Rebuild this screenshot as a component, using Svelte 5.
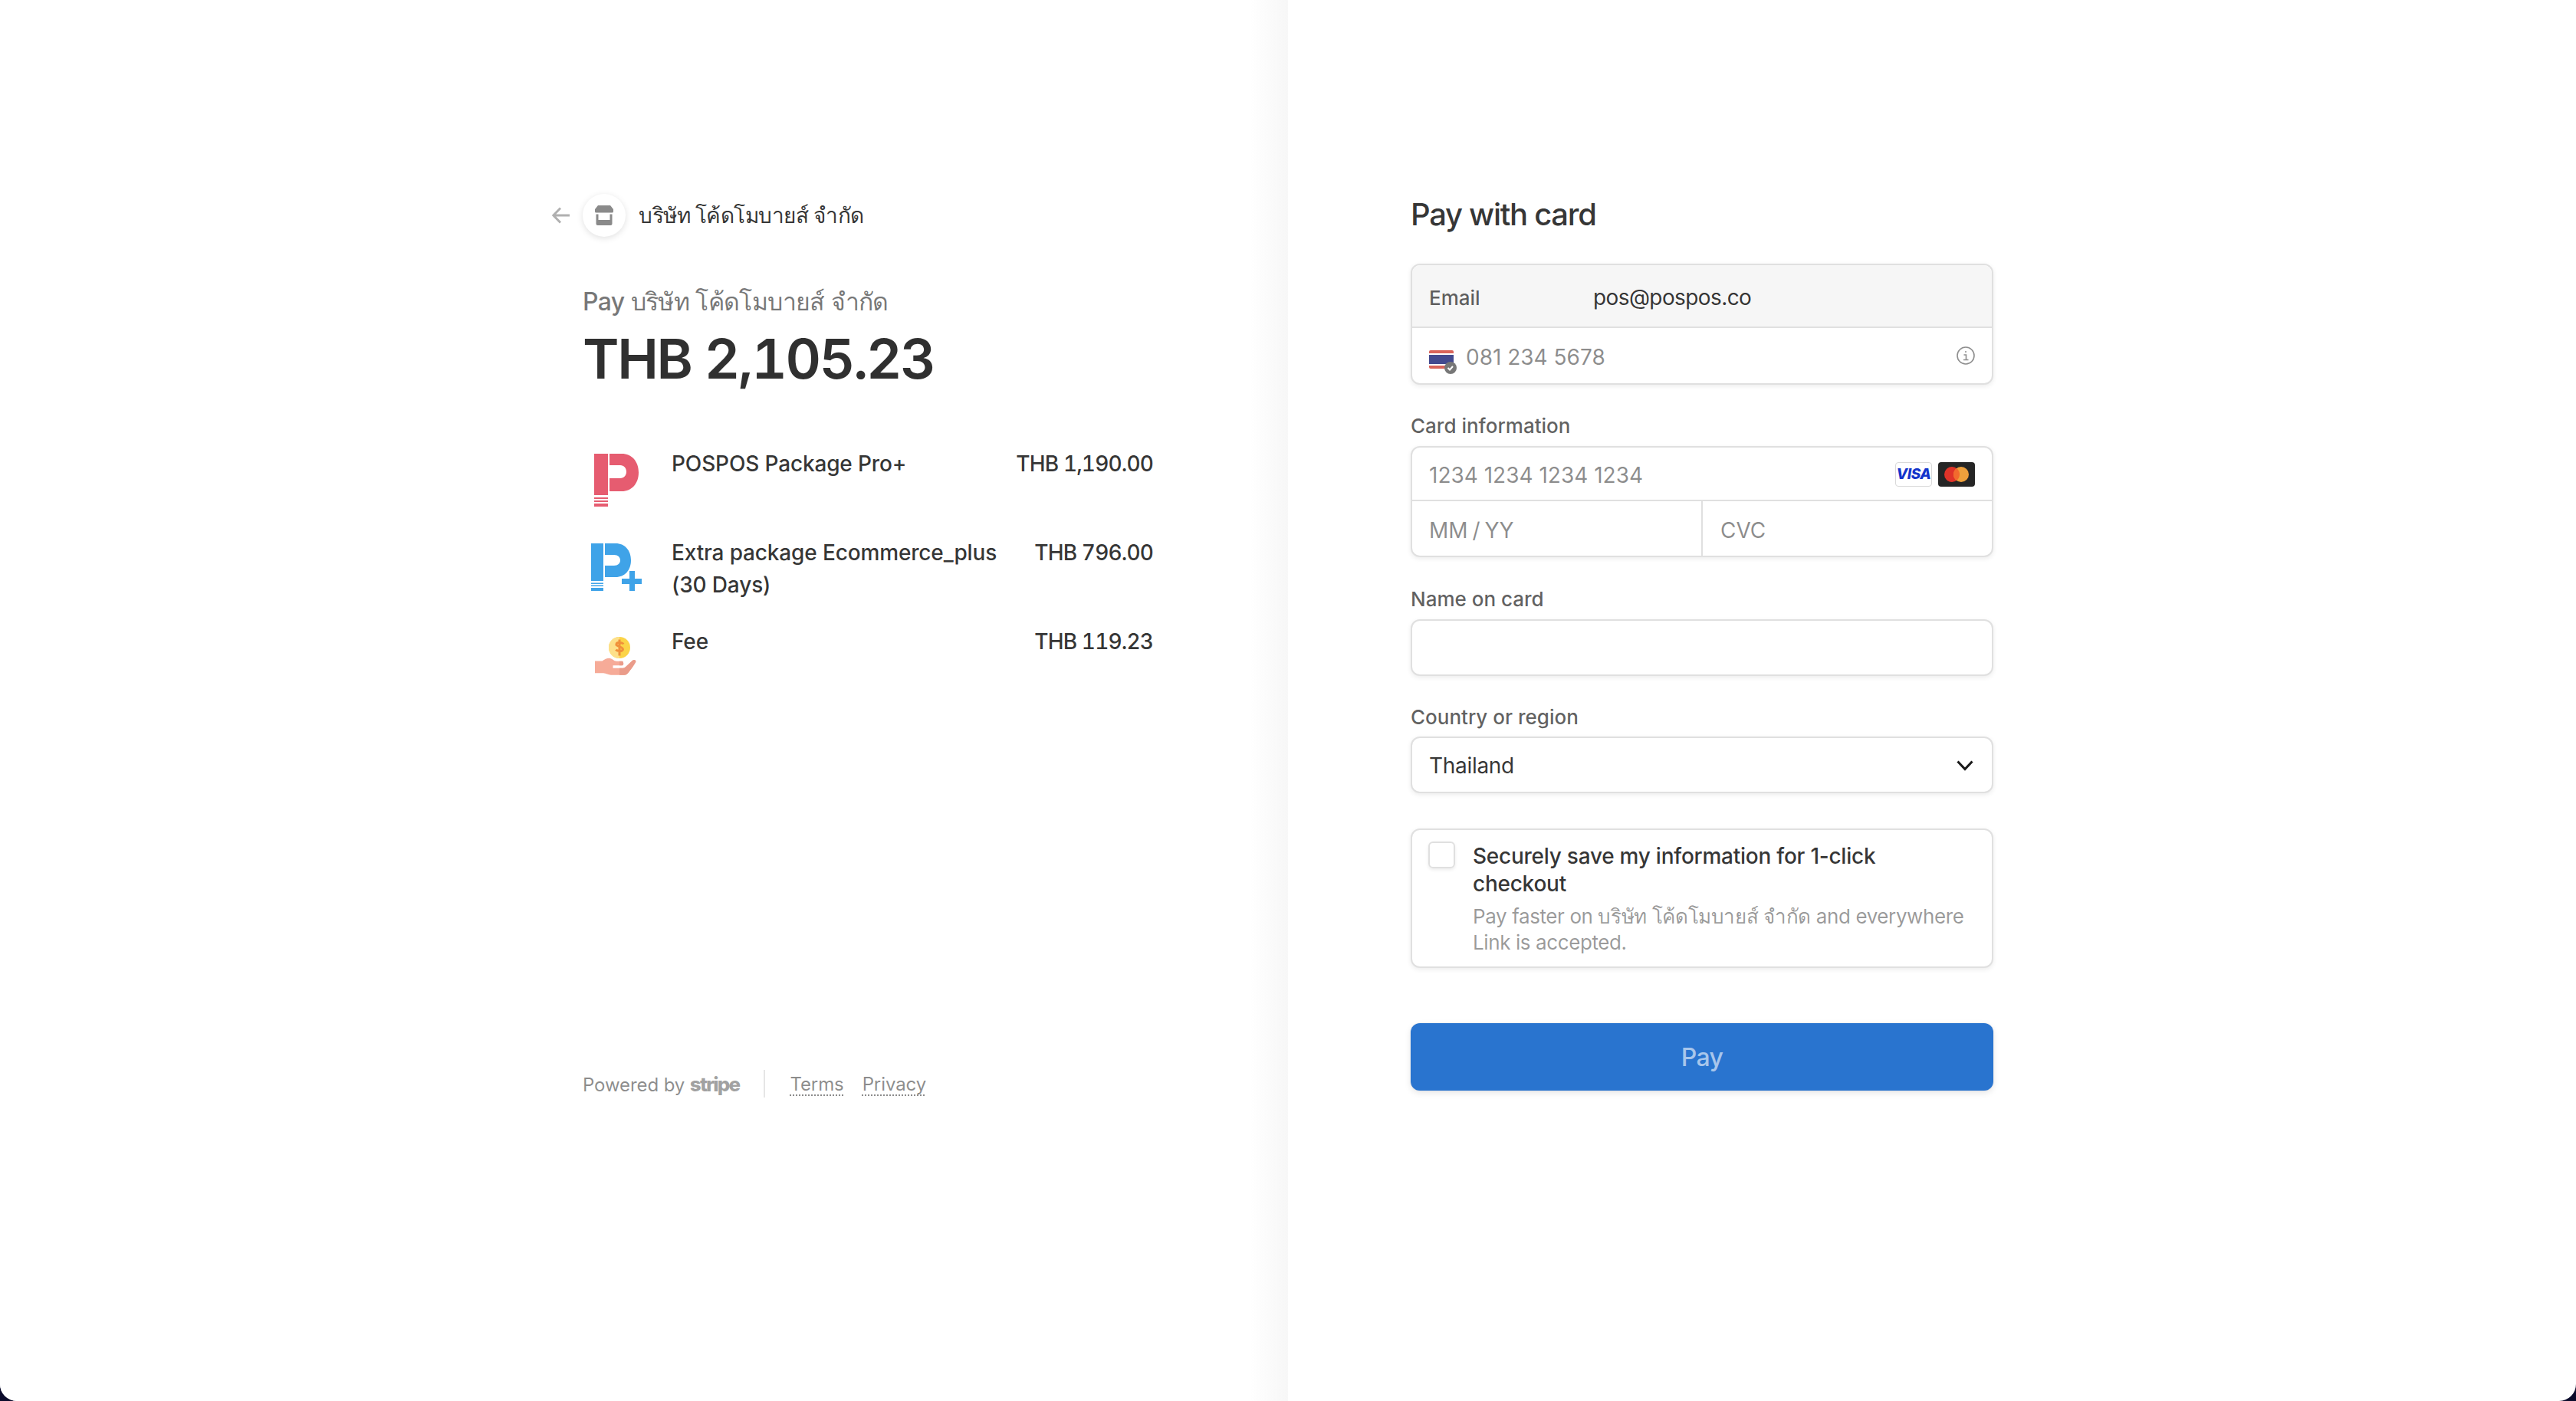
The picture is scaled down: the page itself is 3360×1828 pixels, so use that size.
<script>
	const items = [
		{ name: 'POSPOS Package Pro+', price: 'THB 1,190.00', icon: 'red' },
		{ name: 'Extra package Ecommerce_plus (30 Days)', price: 'THB 796.00', icon: 'blue' },
		{ name: 'Fee', price: 'THB 119.23', icon: 'fee' }
	]
	const company = 'บริษัท โค้ดโมบายส์ จำกัด'
	const hand = 'M16 46.500h9.500c3-2.500 6-3.800 9-3.800 4 0 6 4 10 4h7c2 0 2.500 5.500 0 5.500H39.500v3.500h13c2 0 3-1 4.500-2.500l8-7.500c2-1.800 5.500-.5 4 2.500-2.500 4-5 8-8 11.500-2 3-4 5-7 5H37c-4 0-6-2.500-10-2.500H16z'
</script>

<div class="window">
	<section class="overview">
		<header class="merchant">
			<svg class="back" width="24" height="24" viewBox="0 0 24 24" fill="none" stroke="#b0b0b0" stroke-width="3">
				<path d="M23 12H2M11 2.500 1.800 12l9.200 9.500" />
			</svg>
			<span class="avatar">
				<svg width="24" height="26" viewBox="0 0 24 26" fill="#8a8a8a">
					<path d="M4 0h16l4 5v3a1.500 1.500 0 0 1-1.500 1.500h-21A1.500 1.500 0 0 1 0 8V5z" />
					<path d="M1.500 11.500h3v7.500h15v-7.500h3V24a2 2 0 0 1-2 2h-17a2 2 0 0 1-2-2z" />
				</svg>
			</span>
			<span class="merchant-name">{company}</span>
		</header>

		<p class="pay-to">Pay {company}</p>
		<p class="total">THB 2,105.23</p>

		<ul class="items">
			{#each items as item}
				<li class="item">
					<svg class="thumb" width="84" height="84" viewBox="0 0 84 84">
						{#if item.icon === 'red'}
							<g fill="#e65c70">
								<path d="M15 8h18v54H15zM15 65h18v2H15zM15 69h18v2H15zM15 73h18v4H15z" />
								<path d="M35 8h16c13 0 22 10 22 24.500S64 57 51 57H35zM35 23v17h14c5 0 8-4 8-8.500S54 23 49 23z" fill-rule="evenodd" />
							</g>
						{:else if item.icon === 'blue'}
							<g fill="#3fa3e8">
								<path d="M11 9h16v49H11zM11 60.500h16v1.500H11zM11 63.500h16v1.500H11zM11 67h16v4H11z" />
								<path d="M29 9h14c12 0 20 9 20 22S55 53 43 53H29zM29 24v14h12c5 0 8-3 8-7s-3-7-8-7z" fill-rule="evenodd" />
								<path d="M61 45h7v10h9v7h-9v9h-7v-9H51v-7h10z" />
							</g>
						{:else}
							<clipPath id="palm-shade"><rect x="48" y="40" width="24" height="28" /></clipPath>
							<circle cx="48" cy="29" r="14" fill="#fbd448" />
							<path d="M48 15a14 14 0 0 0 0 28z" fill="#fde08a" />
							<path d="M53 24.500c-1-2.500-8-3-9-.5-1.500 3.500 9 3.500 8.500 7.500-1 3-7.500 2.500-9 0M48 18.500v21" fill="none" stroke="#f0913a" stroke-width="3" />
							<path d={hand} fill="#f6ab98" />
							<path d={hand} fill="#ea9c8a" clip-path="url(#palm-shade)" />
						{/if}
					</svg>
					<span class="item-name">{item.name}</span>
					<span class="item-price">{item.price}</span>
				</li>
			{/each}
		</ul>

		<footer class="legal">
			<span class="powered">Powered by <b class="wordmark">stripe</b></span>
			<i class="sep"></i>
			<a href="#terms">Terms</a>
			<a href="#privacy">Privacy</a>
		</footer>
	</section>

	<section class="payment">
		<h1>Pay with card</h1>

		<div class="box contact">
			<div class="row email">
				<span class="email-label">Email</span>
				<span class="email-value">pos@pospos.co</span>
			</div>
			<div class="row phone">
				<svg class="flag" width="36" height="32" viewBox="0 0 36 32">
					<rect width="32" height="24" rx="2" fill="#d9645a" />
					<rect y="4" width="32" height="16" fill="#fff" />
					<rect y="6" width="32" height="12" fill="#434a8f" />
					<circle cx="28" cy="23" r="8" fill="#777" />
					<path d="M24.500 23l2.500 2.500 4-4.500" fill="none" stroke="#fff" stroke-width="2" />
				</svg>
				<span class="hint">081 234 5678</span>
				<svg class="info" width="24" height="24" viewBox="0 0 24 24" fill="none" stroke="#8e8e8e" stroke-width="1.600">
					<circle cx="12" cy="12" r="11" />
					<path d="M9.500 11h3v6.500M9 17.500h6.500" />
					<circle cx="12" cy="7" r="1" fill="#8e8e8e" stroke="none" />
				</svg>
			</div>
		</div>

		<div class="field-label first">Card information</div>
		<div class="box card">
			<div class="row number">
				<span class="hint">1234 1234 1234 1234</span>
				<span class="brands">
					<span class="brand visa">VISA</span>
					<svg class="brand" width="48" height="32" viewBox="0 0 48 32">
						<rect width="48" height="32" rx="4" fill="#252525" />
						<circle cx="18" cy="16" r="10" fill="#df3329" />
						<circle cx="30" cy="16" r="10" fill="#eea03c" />
						<path d="M24 8a10 10 0 0 1 0 16 10 10 0 0 1 0-16z" fill="#f26a2e" />
					</svg>
				</span>
			</div>
			<div class="split">
				<div class="row cell"><span class="hint expiry">MM / YY</span></div>
				<div class="row cell"><span class="hint">CVC</span></div>
			</div>
		</div>

		<div class="field-label name-label">Name on card</div>
		<div class="box single"></div>

		<div class="field-label country-label">Country or region</div>
		<div class="box single country">
			<span>Thailand</span>
			<svg width="22" height="14" viewBox="0 0 22 14" fill="none" stroke="#1a1a1a" stroke-width="3">
				<path d="M1.500 1.500 11 11.500l9.500-10" />
			</svg>
		</div>

		<div class="box save">
			<span class="checkbox"></span>
			<div class="save-text">
				<div class="save-title">Securely save my information for 1-click checkout</div>
				<div class="save-note">Pay faster on {company} and everywhere Link is accepted.</div>
			</div>
		</div>

		<button class="pay" type="button">Pay</button>
	</section>
</div>

<style>
	:global(body) {
		margin: 0;
		background: #0b0b2b;
	}
	.window {
		display: flex;
		height: 1828px;
		overflow: hidden;
		border-radius: 0 0 22px 22px;
		background: #fff;
		font-family: Inter, "Noto Sans", "DejaVu Sans", sans-serif;
		font-size: 28px;
		color: rgba(26, 26, 26, 0.9);
	}
	.overview {
		box-sizing: border-box;
		width: 1680px;
		padding: 253px 176px 0 760px;
		background: linear-gradient(to right, #fff 1630px, #f7f7f7);
	}
	.merchant {
		display: flex;
		align-items: center;
		height: 56px;
		margin-left: -40px;
	}
	.back {
		margin-right: 16px;
	}
	.avatar {
		display: flex;
		align-items: center;
		justify-content: center;
		width: 56px;
		height: 56px;
		border-radius: 50%;
		background: #fff;
		box-shadow: 0 2px 8px rgba(0, 0, 0, 0.12);
	}
	.merchant-name {
		margin-left: 17px;
		font-weight: 500;
		letter-spacing: -0.5px;
	}
	.pay-to {
		margin: 61px 0 0;
		font-size: 32px;
		line-height: 48px;
		font-weight: 500;
		letter-spacing: -0.6px;
		color: rgba(26, 26, 26, 0.6);
	}
	.total {
		margin: 6px 0 0;
		font-size: 72px;
		line-height: 88px;
		font-weight: 600;
		font-variant-numeric: tabular-nums;
		letter-spacing: -2.3px;
		color: rgba(26, 26, 26, 0.9);
	}
	.items {
		margin: 72px 0 0;
		padding: 0;
		list-style: none;
	}
	.item {
		display: flex;
		min-height: 84px;
		margin-bottom: 32px;
		font-weight: 500;
		line-height: 42px;
		letter-spacing: -0.15px;
	}
	.thumb {
		flex: none;
		margin-right: 32px;
	}
	.item-name {
		width: 440px;
	}
	.item-price {
		margin-left: auto;
		font-variant-numeric: tabular-nums;
		letter-spacing: -0.85px;
	}
	.legal {
		display: flex;
		align-items: center;
		height: 36px;
		margin-top: 496px;
		font-size: 24px;
		letter-spacing: -0.1px;
		color: rgba(26, 26, 26, 0.5);
	}
	.wordmark {
		font-size: 26px;
		font-weight: 800;
		letter-spacing: -1.8px;
		color: rgba(26, 26, 26, 0.42);
	}
	.sep {
		width: 2px;
		height: 36px;
		margin: 0 32px;
		background: #e6e6e6;
	}
	.legal a {
		margin-right: 24px;
		color: inherit;
		text-decoration: underline dotted 2px;
		text-underline-offset: 6px;
	}
	.payment {
		box-sizing: border-box;
		width: 1680px;
		padding: 256px 760px 0 160px;
	}
	h1 {
		margin: 0 0 40px;
		font-size: 40px;
		line-height: 48px;
		font-weight: 500;
		letter-spacing: -1.3px;
	}
	.box {
		box-sizing: border-box;
		overflow: hidden;
		border: 2px solid #e0e0e0;
		border-radius: 12px;
		background: #fff;
		box-shadow: 0 2px 6px rgba(0, 0, 0, 0.08);
	}
	.row {
		display: flex;
		align-items: center;
		box-sizing: border-box;
		padding: 4px 22px 0;
	}
	.email {
		height: 82px;
		border-bottom: 2px solid #e0e0e0;
		background: #f6f6f6;
		font-size: 26px;
	}
	.email-label {
		width: 214px;
		font-weight: 500;
		color: rgba(26, 26, 26, 0.7);
	}
	.email-value {
		font-size: 28px;
		letter-spacing: -0.6px;
	}
	.phone {
		height: 72px;
	}
	.flag {
		margin: 13px 12px 0 0;
	}
	.info {
		margin-left: auto;
		margin-bottom: 5px;
	}
	.hint {
		color: rgba(26, 26, 26, 0.5);
	}
	.expiry {
		word-spacing: -2px;
	}
	.field-label {
		height: 32px;
		margin: 38px 0 10px;
		font-size: 26px;
		line-height: 32px;
		font-weight: 500;
		color: rgba(26, 26, 26, 0.7);
	}
	.name-label {
		margin-top: 39px;
	}
	.number {
		justify-content: space-between;
		height: 70px;
		border-bottom: 2px solid #e0e0e0;
	}
	.brands {
		display: flex;
		gap: 8px;
		margin-top: -3px;
	}
	.brand {
		display: block;
		box-sizing: border-box;
		width: 48px;
		height: 32px;
	}
	.visa {
		border: 1px solid #d9d9d9;
		border-radius: 4px;
		font-size: 19px;
		line-height: 30px;
		font-weight: 800;
		font-style: italic;
		text-align: center;
		letter-spacing: -0.5px;
		color: #1434cb;
	}
	.split {
		display: flex;
	}
	.cell {
		flex: 0 0 377px;
		height: 71px;
	}
	.cell + .cell {
		flex: 1;
		padding-left: 23px;
		border-left: 2px solid #e0e0e0;
	}
	.single {
		height: 74px;
	}
	.country-label {
		margin-bottom: 9px;
	}
	.country {
		display: flex;
		align-items: center;
		justify-content: space-between;
		padding: 2px 24px 0 22px;
		letter-spacing: -0.3px;
	}
	.save {
		display: flex;
		height: 182px;
		margin-top: 46px;
		padding: 15px 21px 0;
	}
	.checkbox {
		flex: none;
		box-sizing: border-box;
		width: 35px;
		height: 35px;
		border: 2px solid #e0e0e0;
		border-radius: 6px;
		box-shadow: 0 2px 4px rgba(0, 0, 0, 0.08);
	}
	.save-text {
		margin: 1px 0 0 23px;
	}
	.save-title {
		max-width: 600px;
		line-height: 36px;
		font-weight: 500;
		letter-spacing: -0.25px;
	}
	.save-note {
		margin-top: 8px;
		font-size: 26px;
		line-height: 34px;
		letter-spacing: -0.4px;
		color: rgba(26, 26, 26, 0.45);
	}
	.pay {
		display: block;
		box-sizing: border-box;
		width: 760px;
		height: 88px;
		margin-top: 72px;
		border: 0;
		border-radius: 12px;
		background: #2974cf;
		box-shadow: 0 0 0 1px rgba(50, 50, 93, 0.05), 0 3px 8px rgba(0, 0, 0, 0.1);
		font-family: inherit;
		font-size: 32px;
		font-weight: 500;
		letter-spacing: -0.6px;
		color: rgba(255, 255, 255, 0.6);
	}
</style>
